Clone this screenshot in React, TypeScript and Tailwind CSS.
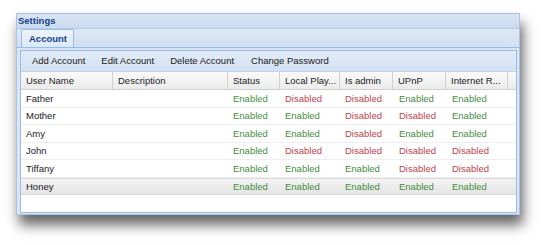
import React from "react";

const cols = [
  { label: "User Name", w: "w-[92px]" },
  { label: "Description", w: "w-[115px]" },
  { label: "Status", w: "w-[52px]" },
  { label: "Local Play...", w: "w-[60px]" },
  { label: "Is admin", w: "w-[53px]" },
  { label: "UPnP", w: "w-[53px]" },
  { label: "Internet R...", w: "w-[62px]" },
];

type Row = { name: string; v: boolean[] };
const rows: Row[] = [
  { name: "Father", v: [true, false, false, true, true] },
  { name: "Mother", v: [true, true, false, false, true] },
  { name: "Amy", v: [true, true, false, true, true] },
  { name: "John", v: [true, false, false, false, false] },
  { name: "Tiffany", v: [true, true, true, false, false] },
  { name: "Honey", v: [true, true, true, true, true] },
];

function Val({ on }: { on: boolean }) {
  return on ? (
    <span className="text-[#448d3e]">Enabled</span>
  ) : (
    <span className="text-[#c2414a]">Disabled</span>
  );
}

export default function App() {
  return (
    <div className="w-[545px] h-[245px] bg-white pt-[13px] pl-[16px] font-['Liberation_Sans',Arial,sans-serif] text-[9.5px] leading-none text-[#1a1a1a]">
      <div className="w-[504px] h-[202px] border border-[#a9c3e6] bg-[#d3e1f2] flex flex-col shadow-[3px_10px_12px_rgba(0,0,0,0.6)]">
        {/* header */}
        <div className="h-[15px] flex items-center pl-[1px] bg-gradient-to-b from-[#d9e5f4] to-[#cbdbef] font-bold text-[#15428b] border-b border-[#b9cde8]">
          Settings
        </div>
        {/* tab strip */}
        <div className="h-[19px] flex items-end pl-[4px] bg-gradient-to-b from-[#dde8f6] to-[#d2e0f2] border-b border-[#99bbe8]">
          <div className="h-[18px] w-[53px] border border-b-0 border-[#99bbe8] rounded-t-[2px] bg-gradient-to-b from-[#eef4fb] to-[#dce8f7] flex items-center pl-[7px] font-bold text-[#15428b]">
            Account
          </div>
        </div>
        <div className="flex-1 pl-[3px] pr-[2px] pt-[2px] pb-[1px] bg-[#dbe6f4] flex">
          <div className="flex-1 border border-[#99bbe8] bg-white flex flex-col">
            {/* toolbar */}
            <div className="h-[21px] flex items-center bg-gradient-to-b from-[#e3ecf8] to-[#d3e0f1] border-b border-[#c1d3ea] text-[#1a1a1a]">
              <span className="ml-[11px]">Add Account</span>
              <span className="ml-[16px]">Edit Account</span>
              <span className="ml-[16px]">Delete Account</span>
              <span className="ml-[17px]">Change Password</span>
            </div>
            {/* grid header */}
            <div className="h-[18px] flex bg-gradient-to-b from-[#fafafa] to-[#ebebeb] border-b border-[#d0d0d0]">
              {cols.map((c) => (
                <div
                  key={c.label}
                  className={`${c.w} shrink-0 flex items-center pl-[5px] border-r border-[#d0d0d0] text-[#222]`}
                >
                  {c.label}
                </div>
              ))}
            </div>
            {/* rows */}
            <div className="flex-1 flex flex-col">
              {rows.map((r, i) => (
                <div
                  key={r.name}
                  className={
                    i === rows.length - 1
                      ? "h-[17.5px] flex items-center bg-gradient-to-b from-[#f3f3f3] to-[#e5e5e5] border-y border-[#dadada]"
                      : "h-[17.5px] flex items-center border-b border-[#eeeeee]"
                  }
                >
                  <div className="w-[92px] shrink-0 pl-[5px]">{r.name}</div>
                  <div className="w-[115px] shrink-0"></div>
                  <div className="w-[52px] shrink-0 pl-[5px]">
                    <Val on={r.v[0]} />
                  </div>
                  <div className="w-[60px] shrink-0 pl-[5px]">
                    <Val on={r.v[1]} />
                  </div>
                  <div className="w-[53px] shrink-0 pl-[5px]">
                    <Val on={r.v[2]} />
                  </div>
                  <div className="w-[53px] shrink-0 pl-[6px]">
                    <Val on={r.v[3]} />
                  </div>
                  <div className="w-[62px] shrink-0 pl-[6px]">
                    <Val on={r.v[4]} />
                  </div>
                </div>
              ))}
            </div>
          </div>
        </div>
      </div>
    </div>
  );
}
